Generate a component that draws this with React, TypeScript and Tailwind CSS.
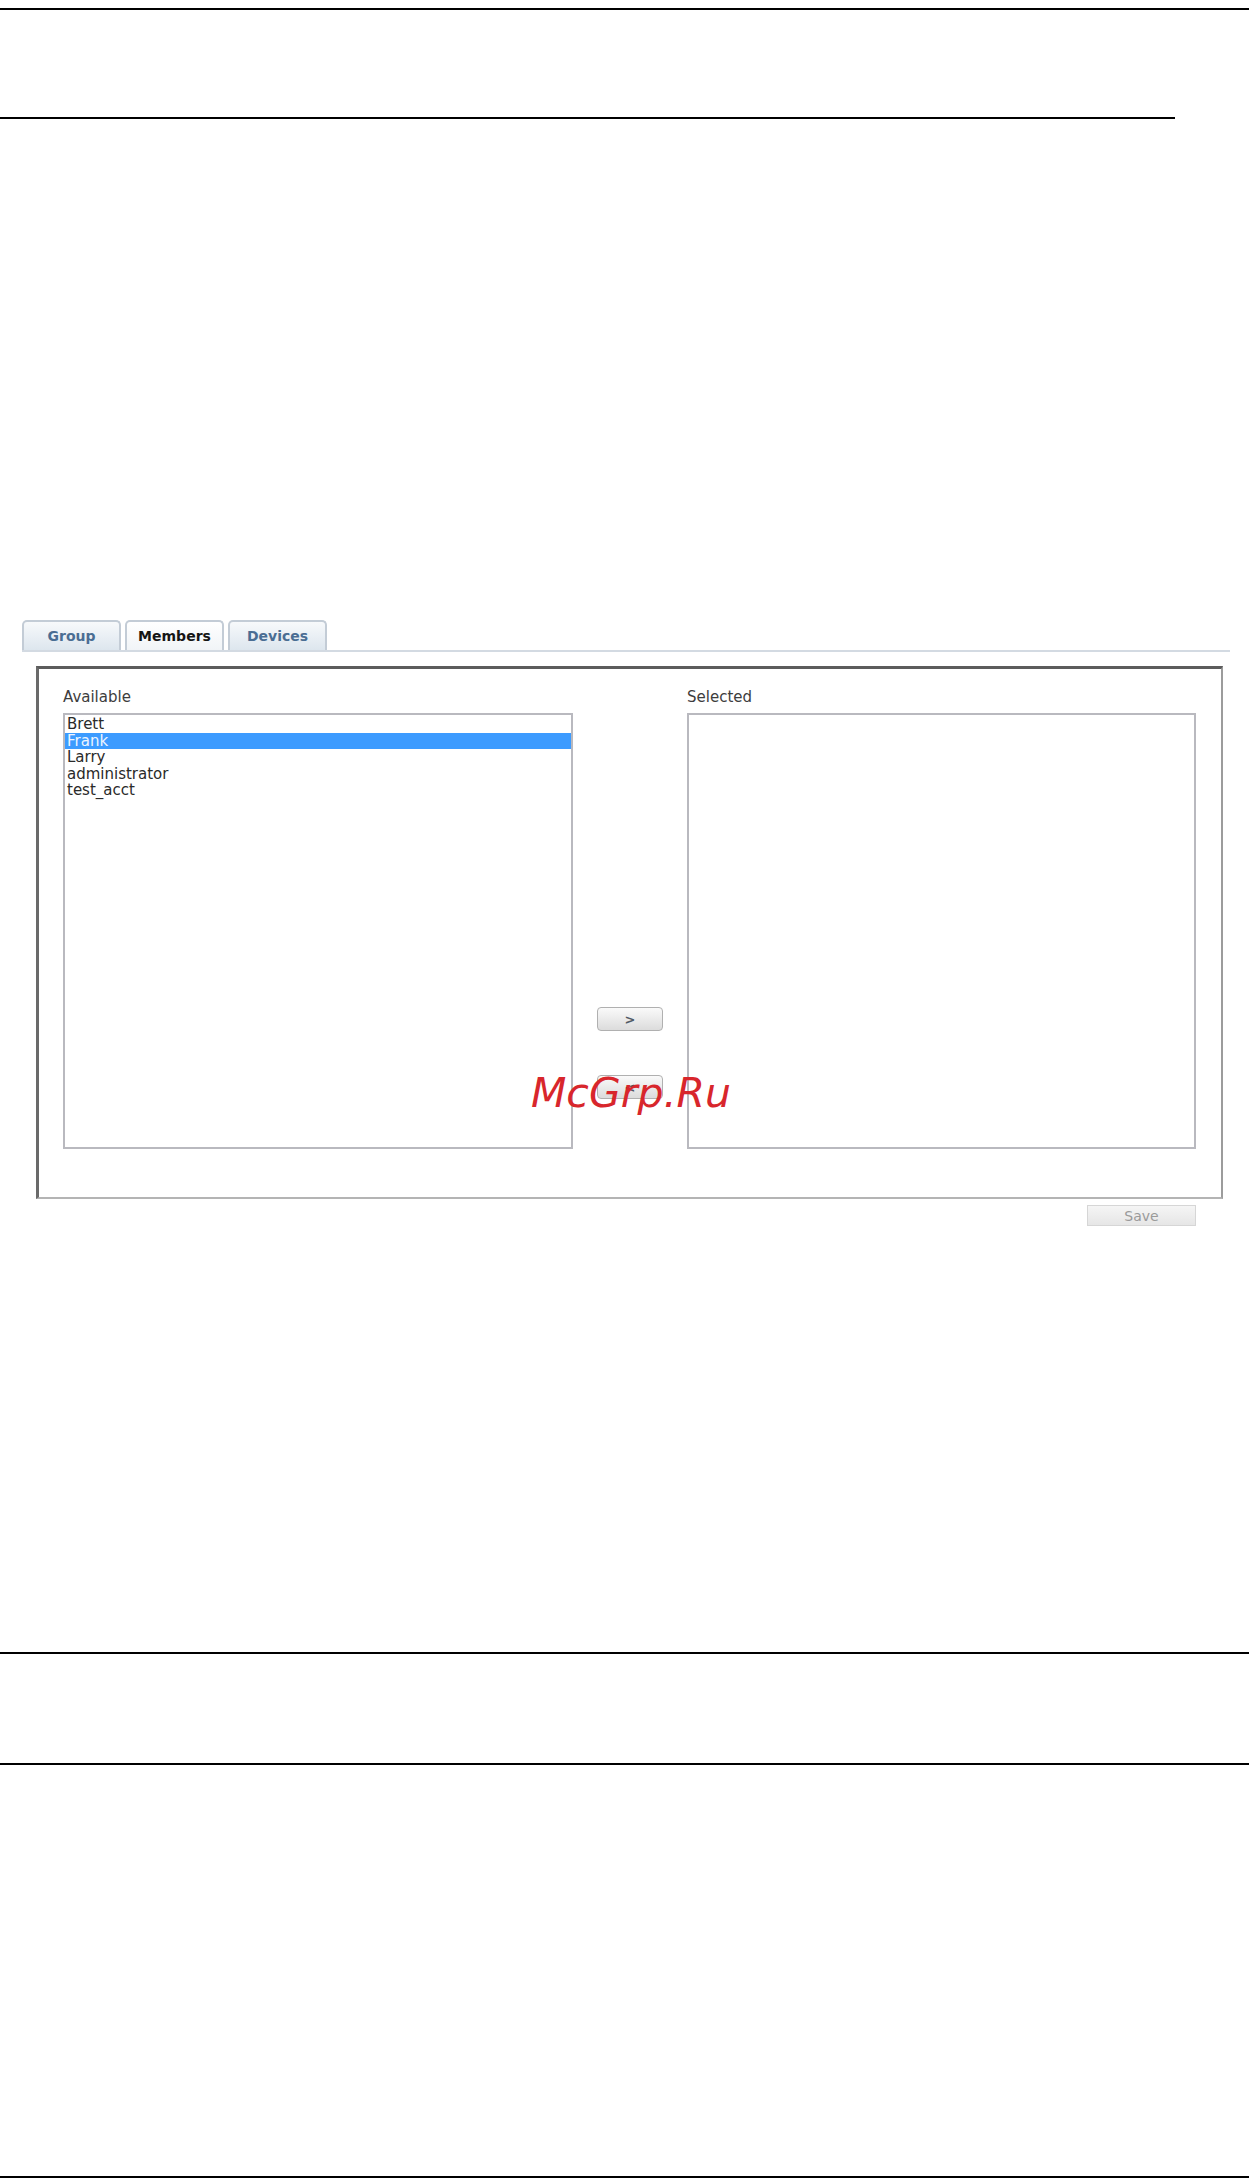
import React from 'react';

const users = ['Brett', 'Frank', 'Larry', 'administrator', 'test_acct'];

const Rule = ({ className = '' }: { className?: string }) => (
  <div className={`h-[2px] bg-black ${className}`} />
);

const Tab = ({ label, active = false }: { label: string; active?: boolean }) => (
  <div
    className={`w-[99px] h-[30px] flex items-center justify-center rounded-t-[5px] border-2 border-b-0 border-[#c3ccd6] text-[14px] font-bold ${
      active
        ? 'bg-gradient-to-b from-white to-[#f1f4f7] text-[#151515]'
        : 'bg-gradient-to-b from-[#f7f9fb] to-[#dde6ee] text-[#4a6d93]'
    }`}
  >
    {label}
  </div>
);

const MoveButton = ({ label }: { label: string }) => (
  <button className="w-[66px] h-[24px] rounded-[4px] border border-[#b0b0b0] bg-gradient-to-b from-[#fafafa] to-[#dcdcdc] text-[13px] font-bold text-[#505a66] leading-none">
    {label}
  </button>
);

const ListBox = ({ items, selected }: { items: string[]; selected?: string }) => (
  <div className="h-[436px] border-2 border-[#b9b9bf] bg-white pt-[1px]">
    {items.map((item) => (
      <div
        key={item}
        className={`h-[16.6px] leading-[16.6px] pl-[2px] text-[15px] ${
          item === selected ? 'bg-[#3c9bff] text-[#eef5ff]' : 'text-[#2a2a2a]'
        }`}
      >
        {item}
      </div>
    ))}
  </div>
);

export default function App() {
  return (
    <div className="relative w-[1249px] h-[2180px] bg-white font-['DejaVu_Sans',sans-serif]">
      <Rule className="mt-[8px]" />
      <Rule className="mt-[107px] w-[1175px]" />

      {/* Group editor */}
      <div className="mt-[501px] ml-[22px] w-[1208px]">
        <div className="flex gap-[4px]">
          <Tab label="Group" />
          <Tab label="Members" active />
          <Tab label="Devices" />
        </div>
        <div className="h-[2px] bg-[#d3dae2]" />

        <div className="mt-[14px] ml-[14px] w-[1187px] h-[533px] border-t-[3px] border-l-[3px] border-r-2 border-b-2 border-t-[#5c5c5c] border-l-[#6a6a6a] border-r-[#9c9c9c] border-b-[#b4b4b4] pl-[24px] pt-[18px]">
          <div className="flex">
            <div className="w-[510px]">
              <div className="h-[26px] text-[15px] leading-[20px] text-[#3d3d3d]">Available</div>
              <ListBox items={users} selected="Frank" />
            </div>
            <div className="w-[114px] flex flex-col items-center pt-[320px] gap-[44px]">
              <MoveButton label=">" />
              <MoveButton label="<" />
            </div>
            <div className="w-[509px]">
              <div className="h-[26px] text-[15px] leading-[20px] text-[#3d3d3d]">Selected</div>
              <ListBox items={[]} />
            </div>
          </div>
        </div>

        <div className="flex justify-end w-[1174px] mt-[6px]">
          <button className="w-[109px] h-[21px] border border-[#d6d6d6] bg-gradient-to-b from-[#f5f5f5] to-[#e6e6e6] text-[14px] leading-none text-[#9a9a9a]">
            Save
          </button>
        </div>
      </div>

      <div className="absolute left-[531px] top-[1065px] text-[41px] leading-[41px] italic text-[#d8262c]">
        McGrp.Ru
      </div>

      <Rule className="mt-[426px]" />
      <Rule className="mt-[109px]" />
      <Rule className="mt-[411px]" />
    </div>
  );
}
